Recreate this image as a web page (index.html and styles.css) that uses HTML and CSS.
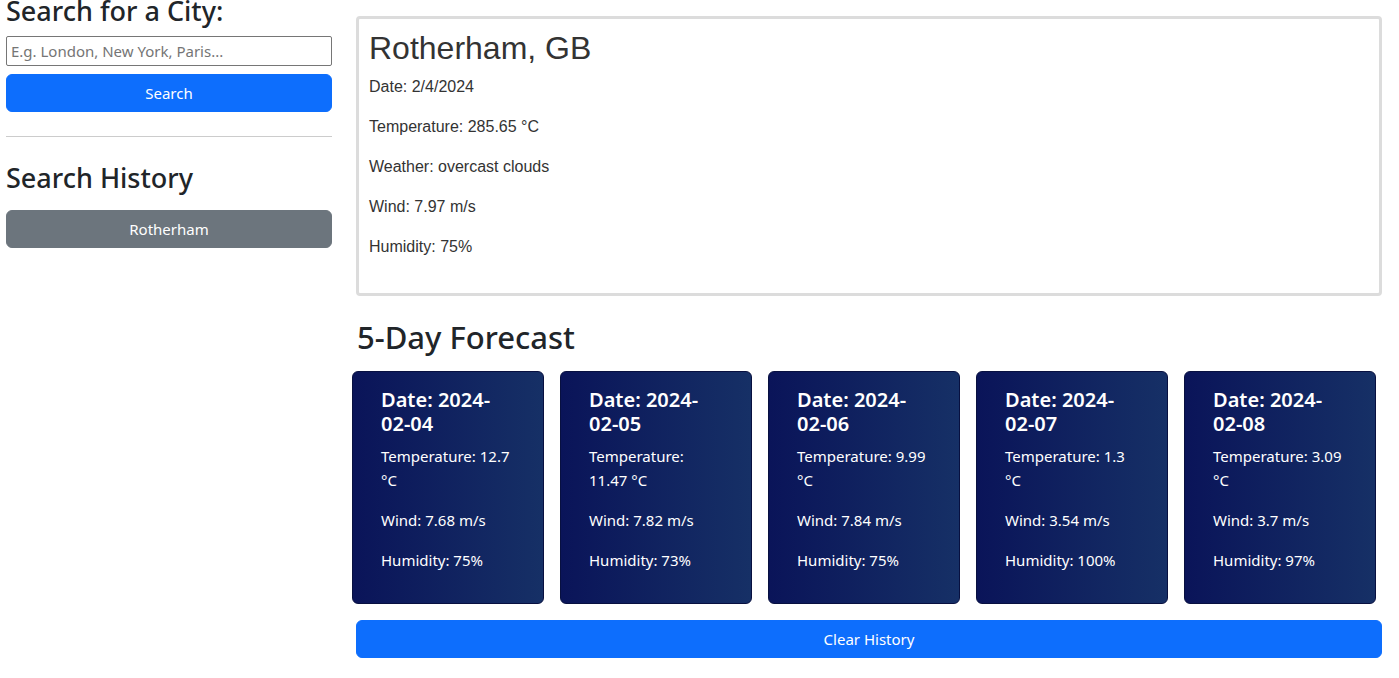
FILE: index.html
```html
<!DOCTYPE html>
<html lang="en">
<head>
<meta charset="utf-8">
<title>Weather Dashboard</title>
<link rel="stylesheet" href="styles.css">
</head>
<body>
<div class="page">
  <aside class="sidebar">
    <h3 class="side-title">Search for a City:</h3>
    <input class="city-input" type="text" placeholder="E.g. London, New York, Paris...">
    <button class="btn btn-primary">Search</button>
    <hr class="divider">
    <h3 class="side-title history-title">Search History</h3>
    <button class="btn btn-secondary">Rotherham</button>
  </aside>
  <main class="main">
    <section class="current">
      <h2 class="city-name">Rotherham, GB</h2>
      <p>Date: 2/4/2024</p>
      <p>Temperature: 285.65 °C</p>
      <p>Weather: overcast clouds</p>
      <p>Wind: 7.97 m/s</p>
      <p>Humidity: 75%</p>
    </section>
    <h2 class="forecast-title">5-Day Forecast</h2>
    <div class="forecast">
      <div class="card">
        <h5 class="card-title">Date: 2024-02-04</h5>
        <p>Temperature: 12.7 °C</p>
        <p>Wind: 7.68 m/s</p>
        <p>Humidity: 75%</p>
      </div>
      <div class="card">
        <h5 class="card-title">Date: 2024-02-05</h5>
        <p>Temperature: 11.47 °C</p>
        <p>Wind: 7.82 m/s</p>
        <p>Humidity: 73%</p>
      </div>
      <div class="card">
        <h5 class="card-title">Date: 2024-02-06</h5>
        <p>Temperature: 9.99 °C</p>
        <p>Wind: 7.84 m/s</p>
        <p>Humidity: 75%</p>
      </div>
      <div class="card">
        <h5 class="card-title">Date: 2024-02-07</h5>
        <p>Temperature: 1.3 °C</p>
        <p>Wind: 3.54 m/s</p>
        <p>Humidity: 100%</p>
      </div>
      <div class="card">
        <h5 class="card-title">Date: 2024-02-08</h5>
        <p>Temperature: 3.09 °C</p>
        <p>Wind: 3.7 m/s</p>
        <p>Humidity: 97%</p>
      </div>
    </div>
    <button class="btn btn-primary clear-btn">Clear History</button>
  </main>
</div>
</body>
</html>
```
FILE: styles.css
```css
* { box-sizing: border-box; }
body {
  margin: 0;
  font-family: "Noto Sans", "Liberation Sans", sans-serif;
  font-size: 16px;
  line-height: 1.5;
  color: #212529;
  background: #fff;
}
.page {
  display: flex;
  gap: 24px;
  padding: 0 17px 0 6px;
}
.sidebar {
  width: 326px;
  flex: none;
  display: flex;
  flex-direction: column;
}
.side-title {
  font-size: 27px;
  font-weight: 500;
  line-height: 22px;
  margin: 0 0 14px;
}
.history-title {
  line-height: 32px;
  margin: 25px 0 16px;
}
.city-input {
  height: 30px;
  border: 1px solid #767676;
  border-radius: 2px;
  padding: 0 4px;
  font-family: inherit;
  font-size: 15px;
  color: #212529;
  margin-bottom: 8px;
}
.city-input::placeholder { color: #757575; }
.btn {
  display: block;
  width: 100%;
  height: 38px;
  border: 1px solid transparent;
  border-radius: 6px;
  font-family: inherit;
  font-size: 15px;
  color: #fff;
  cursor: pointer;
}
.btn-primary { background: #0d6efd; border-color: #0d6efd; }
.btn-secondary { background: #6c757d; border-color: #6c757d; }
.divider {
  margin: 24px 0 0;
  border: 0;
  border-top: 1px solid #ccc;
}
.main {
  flex: 1;
  padding-top: 16px;
  display: flex;
  flex-direction: column;
}
.current {
  border: 3px solid #dcdcdc;
  border-radius: 4px;
  padding: 10px 10px 20px;
  font-family: "Liberation Sans", Arial, sans-serif;
  color: #333;
  height: 280px;
}
.city-name {
  font-size: 32px;
  font-weight: 400;
  line-height: 1.2;
  margin: 0 0 8px;
}
.current p {
  margin: 0 0 16px;
  line-height: 24px;
}
.forecast-title {
  font-size: 31px;
  font-weight: 500;
  line-height: 1.2;
  margin: 23px 0 15px 1px;
}
.forecast {
  display: flex;
  gap: 16px;
  margin-left: -4px;
  margin-right: 6px;
}
.card {
  width: 192px;
  height: 233px;
  flex: none;
  background: linear-gradient(to right, #0a1459, #163066);
  border: 1px solid #081040;
  border-radius: 6px;
  color: #fff;
  padding: 16px 28px 16px 28px;
}
.card-title {
  font-size: 20px;
  font-weight: 600;
  line-height: 1.2;
  margin: 0 0 8px;
}
.card p {
  margin: 0 0 16px;
  font-size: 15px;
  line-height: 24px;
}
.clear-btn {
  margin-top: 16px;
}
```
